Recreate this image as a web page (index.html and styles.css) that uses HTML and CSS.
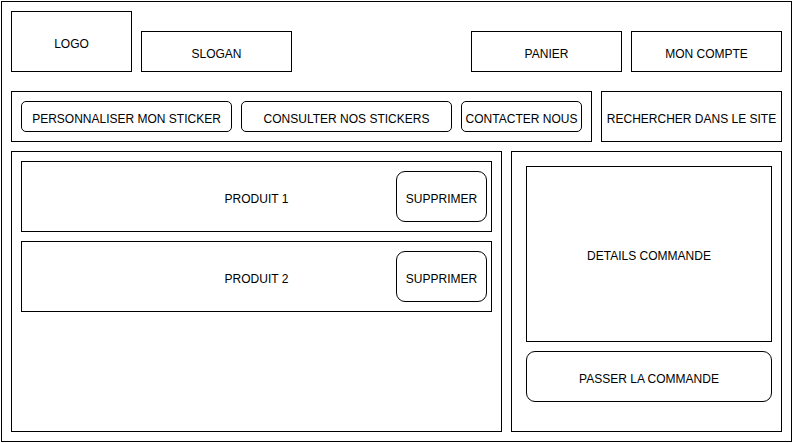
FILE: index.html
```html
<!DOCTYPE html>
<html>
  <head>
    <meta charset="utf-8" />
    <title>Panier</title>
    <meta name="viewport" content="width=device-width, initial-scale=1" />
    <link rel="stylesheet" href="styles.css">
  </head>
  <body>
    <div class="page">
      <div class="header">
        <div class="box logo">LOGO</div>
        <div class="box slogan">SLOGAN</div>
        <div class="box header-link cart">PANIER</div>
        <div class="box header-link">MON COMPTE</div>
      </div>

      <div class="nav-row">
        <div class="box nav">
          <div class="box pill nav-wide">PERSONNALISER MON STICKER</div>
          <div class="box pill nav-wide">CONSULTER NOS STICKERS</div>
          <div class="box pill nav-small">CONTACTER NOUS</div>
        </div>
        <div class="box search">RECHERCHER DANS LE SITE</div>
      </div>

      <div class="main">
        <div class="box products">
          <div class="box product">
            <div class="product-name">PRODUIT 1</div>
            <div class="box round remove">SUPPRIMER</div>
          </div>
          <div class="box product">
            <div class="product-name">PRODUIT 2</div>
            <div class="box round remove">SUPPRIMER</div>
          </div>
        </div>

        <div class="box order">
          <div class="box details">DETAILS COMMANDE</div>
          <div class="box round checkout">PASSER LA COMMANDE</div>
        </div>
      </div>
    </div>
  </body>
</html>
```

FILE: styles.css
```css
* {
  box-sizing: border-box;
}

body {
  margin: 0;
  background: #fff;
  color: #000;
  font-family: "Liberation Sans", Arial, sans-serif;
  font-size: 12px;
}

.page {
  margin: 1px 0 0 1px;
  width: 791px;
  height: 441px;
  border: 1px solid #000;
  padding: 9px;
}

.box {
  border: 1px solid #000;
  display: flex;
  align-items: center;
  justify-content: center;
  padding-top: 4px;
  white-space: nowrap;
}

.pill {
  border-radius: 5px;
}

.round {
  border-radius: 9px;
}

/* header */
.header {
  display: flex;
  align-items: flex-end;
  gap: 9px;
  height: 61px;
}

.logo {
  width: 121px;
  height: 61px;
}

.slogan,
.header-link {
  width: 151px;
  height: 41px;
}

.cart {
  margin-left: auto;
}

/* navigation */
.nav-row {
  display: flex;
  gap: 9px;
  margin-top: 19px;
  height: 51px;
}

.nav {
  width: 581px;
  padding: 0 9px;
  gap: 9px;
}

.nav .pill {
  height: 31px;
}

.nav-wide {
  width: 211px;
}

.nav-small {
  width: 121px;
}

.search {
  width: 181px;
}

/* main area */
.main {
  display: flex;
  gap: 9px;
  margin-top: 9px;
  height: 281px;
}

.products {
  width: 491px;
  padding: 9px;
  flex-direction: column;
  justify-content: flex-start;
  align-items: stretch;
  gap: 9px;
}

.product {
  display: grid;
  grid-template-columns: 1fr;
  justify-content: stretch;
  height: 71px;
  padding: 9px 4px;
}

.product-name,
.remove {
  grid-area: 1 / 1;
}

.product-name {
  justify-self: center;
  align-self: center;
  margin-top: 4px;
}

.remove {
  justify-self: end;
  width: 91px;
  height: 51px;
}

.order {
  width: 271px;
  padding: 14px 9px 9px 14px;
  flex-direction: column;
  justify-content: flex-start;
  gap: 9px;
}

.details {
  width: 246px;
  height: 176px;
}

.checkout {
  width: 246px;
  height: 51px;
}
```
